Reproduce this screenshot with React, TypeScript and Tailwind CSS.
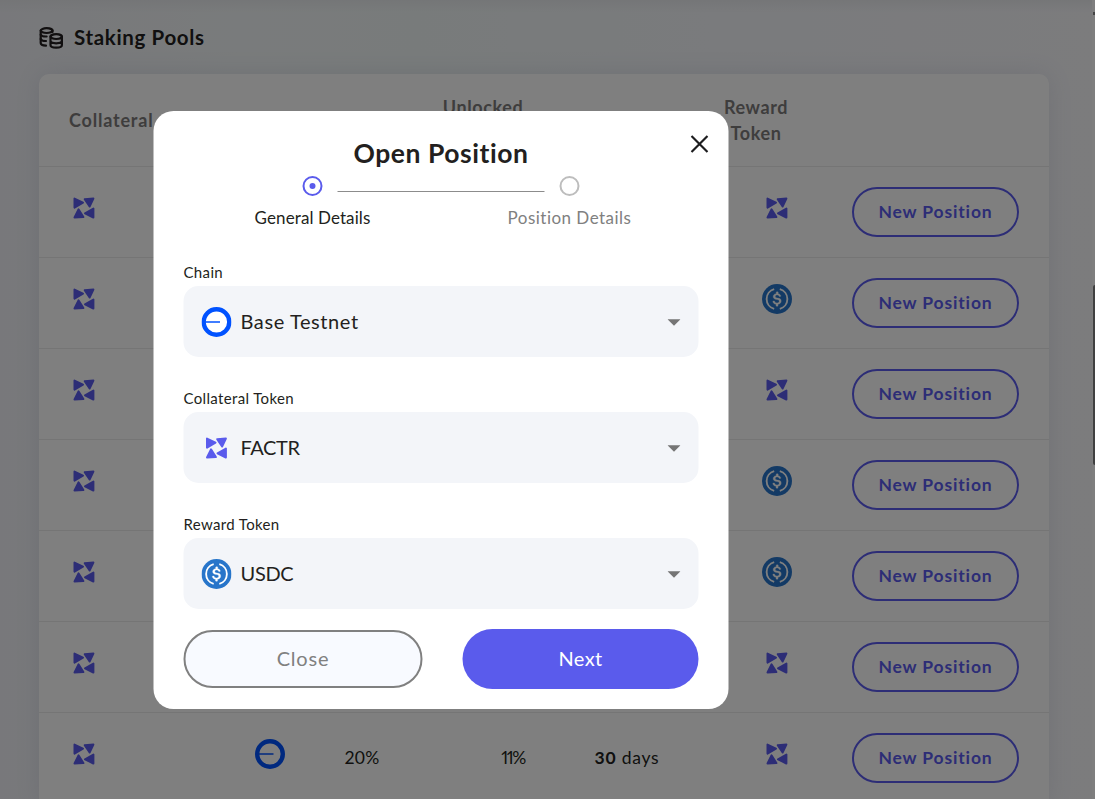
import type { ReactNode } from "react";

type Token = "factr" | "usdc";

interface Pool {
  reward: Token;
  details?: { apr: string; unlocked: string; days: number };
}

const pools: Pool[] = [
  { reward: "factr" },
  { reward: "usdc" },
  { reward: "factr" },
  { reward: "usdc" },
  { reward: "usdc" },
  { reward: "factr" },
  { reward: "factr", details: { apr: "20%", unlocked: "11%", days: 30 } },
];

function FactrIcon() {
  return (
    <svg viewBox="0 0 30 30" className="h-[30px] w-[30px] shrink-0" fill="#5a5bec" stroke="#5a5bec" strokeWidth="2" strokeLinejoin="round">
      <path d="M5.500 5.600 14 9.600 5.500 14.600Z" />
      <path d="M15.700 6.200 24.400 5.600 20.600 13.500Z" />
      <path d="M9.500 16.400 14.400 24.100 5.500 24.500Z" />
      <path d="M24.400 15.500V24.500L16 20.300Z" />
    </svg>
  );
}

function UsdcIcon() {
  return (
    <svg viewBox="0 0 32 32" className="h-[30px] w-[30px] shrink-0">
      <circle cx="16" cy="16" r="16" fill="#2775ca" />
      <path
        fill="#fff"
        stroke="#fff"
        strokeWidth="0.3"
        d="M20.5 18.2c0-2.200-1.300-2.900-4-3.200-1.900-.3-2.300-.8-2.300-1.700s.7-1.500 1.900-1.500c1.100 0 1.800.4 2.100 1.300.1.2.2.3.4.3h1c.3 0 .5-.2.5-.5v-.1c-.3-1.400-1.400-2.400-2.800-2.500V8.800c0-.3-.2-.5-.6-.5h-1c-.3 0-.5.2-.6.5v1.500c-2 .2-3.200 1.500-3.200 3.100 0 2 1.300 2.900 4 3.200 1.800.3 2.400.7 2.400 1.800s-1 1.800-2.200 1.800c-1.800 0-2.400-.7-2.600-1.700-.1-.3-.2-.4-.4-.4h-1.100c-.3 0-.5.2-.5.5v.1c.3 1.600 1.300 2.700 3.400 3v1.500c0 .3.200.5.600.6h1c.3 0 .5-.2.600-.6v-1.500c2-.3 3.400-1.700 3.400-3.500z"
      />
      <path d="M13 5.400a11 11 0 0 0 0 21.200M19 5.400a11 11 0 0 1 0 21.200" fill="none" stroke="#fff" strokeWidth="2" />
    </svg>
  );
}

function BaseIcon() {
  return (
    <svg viewBox="0 0 30 30" className="h-[30px] w-[30px] shrink-0">
      <circle cx="15" cy="15" r="12.800" fill="#fff" stroke="#0052ff" strokeWidth="4.400" />
      <path d="M4 15H18.500" stroke="#0052ff" strokeWidth="1.500" />
    </svg>
  );
}

function CoinsIcon() {
  return (
    <svg viewBox="0 0 24 22" className="h-[22px] w-6 shrink-0" fill="none" stroke="#231f20" strokeWidth="2.200" strokeLinecap="round">
      <ellipse cx="7.600" cy="3.600" rx="5.900" ry="2.400" />
      <path d="M1.700 3.600V16C1.700 17.600 3.600 18.500 7 18.600" />
      <path d="M1.700 7.700C2.500 9.200 4.600 9.600 7.600 9.500M1.700 11.900C2.500 13.400 4.400 14.100 7 14M13.500 3.600V5" />
      <ellipse cx="17.200" cy="9.600" rx="5.700" ry="2.400" />
      <path d="M11.500 9.600V18C11.500 21.500 22.900 21.500 22.900 18V9.600M11.500 13.800C11.500 17.100 22.900 17.100 22.900 13.800" />
    </svg>
  );
}

function TokenIcon({ token }: { token: Token }) {
  return token === "factr" ? <FactrIcon /> : <UsdcIcon />;
}

function SelectField({ label, icon, value, valueClass }: { label: string; icon: ReactNode; value: string; valueClass: string }) {
  return (
    <div className="mb-[28px]">
      <div className="h-[27px] text-[15px] leading-[27px] tracking-[0.35px]">{label}</div>
      <button className="flex h-[71px] w-full items-center rounded-[15px] bg-[#f3f5f9] px-[18px] text-left">
        {icon}
        <span className={valueClass}>{value}</span>
        <svg viewBox="0 0 13 7" className="mt-px ml-auto h-[7px] w-[13px]" fill="#757575">
          <path d="M0 .3H13L6.500 6.800Z" />
        </svg>
      </button>
    </div>
  );
}

function PoolsTable() {
  const cols = "grid grid-cols-[191px_80px_104px_138px_150px_150px_197px] items-center border-b border-[#eaeaea]";
  return (
    <div className="mt-[24px] w-[1010px] rounded-t-[10px] bg-white shadow-[0_0_24px_rgba(80,90,130,0.12)]">
      <div className={`${cols} h-[93px] text-center text-[18px] leading-[26px] font-bold tracking-[0.6px] text-[#7c7a7a]`}>
        <div className="pl-[30px] text-left tracking-[0.8px]">Collateral</div>
        <div />
        <div />
        <div className="pb-[26px]">Unlocked</div>
        <div />
        <div className="pr-[42px]">Reward<br />Token</div>
        <div />
      </div>
      {pools.map(({ reward, details }, i) => (
        <div key={i} className={`${cols} h-[91px] text-center text-[17.5px]`}>
          <div className="pb-2 pl-[30px]"><FactrIcon /></div>
          <div className="flex justify-center pb-2"><BaseIcon /></div>
          <div className="tracking-[0.3px]">{details?.apr}</div>
          <div className="pl-[60px] tracking-[-1.400px] proportional-nums">{details?.unlocked}</div>
          <div className="tracking-[0.750px]">{details && <><b>{details.days}</b> days</>}</div>
          <div className="flex justify-center pb-2"><TokenIcon token={reward} /></div>
          <button className="h-[50px] w-[167px] rounded-full border-2 border-[#5a5bec] text-[17.5px] font-bold tracking-[0.850px] text-[#5a5bec]">New Position</button>
        </div>
      ))}
    </div>
  );
}

function OpenPositionDialog() {
  return (
    <div className="relative h-[598px] w-[575px] translate-x-[0.5px] rounded-[20px] bg-white px-[30px] pt-[25px]">
      <button className="absolute top-[24px] right-[20px]">
        <svg viewBox="0 0 18 18" className="h-[18px] w-[18px]" fill="none" stroke="#1d1d1f" strokeWidth="2.200">
          <path d="M1 1 17 17M17 1 1 17" />
        </svg>
      </button>
      <h2 className="text-center text-[26.5px] leading-[34px] font-bold tracking-[0.550px]">Open Position</h2>
      <div className="mt-[6px] flex items-center justify-center gap-[15px]">
        <div className="flex h-5 w-5 items-center justify-center rounded-full border-2 border-[#5a5bec]">
          <div className="h-1.5 w-1.5 rounded-full bg-[#5a5bec]" />
        </div>
        <div className="mt-[10px] h-px w-[207px] bg-[#8c8c8c]" />
        <div className="h-5 w-5 rounded-full border-2 border-[#bdbdbd]" />
      </div>
      <div className="mt-[10px] grid grid-cols-[257px_257px] justify-center text-center text-[17px] leading-6">
        <div className="tracking-[0.100px]">General Details</div>
        <div className="tracking-[0.480px] text-[#808080]">Position Details</div>
      </div>
      <div className="mt-[29px]">
        <SelectField label="Chain" icon={<BaseIcon />} value="Base Testnet" valueClass="ml-[9px] pb-0.5 text-[20px] tracking-[0.600px]" />
        <SelectField label="Collateral Token" icon={<FactrIcon />} value="FACTR" valueClass="ml-[9px] pb-0.5 text-[20px] tracking-[-0.400px]" />
        <SelectField label="Reward Token" icon={<UsdcIcon />} value="USDC" valueClass="ml-[9px] pb-0.5 text-[20px] tracking-[-0.300px]" />
      </div>
      <div className="mt-[-8px] flex items-center justify-between">
        <button className="h-[58px] w-[239px] rounded-full border-2 border-[#808080] bg-[#f8faff] pb-0.5 text-[20px] tracking-[0.800px] text-[#808080]">Close</button>
        <button className="h-[60px] w-[236px] rounded-full bg-[#5a5bec] pb-0.5 text-[20px] tracking-[0.400px] text-white">Next</button>
      </div>
    </div>
  );
}

export default function App() {
  return (
    <div className="relative h-[799px] w-[1095px] overflow-hidden bg-[linear-gradient(90deg,#f0f1f6_0%,#f3f7f8_22%,#f1f7f7_38%,#f4f6fa_65%,#f8f8fb_100%)] font-['Lato',sans-serif] text-[#231f20]">
      <div className="flex h-full">
        <main className="w-[1092px] pl-[39px]">
          <div className="-ml-[39px] h-[25px] w-[1092px] bg-linear-to-b from-[#e6e8eb]/70 to-transparent to-50%" />
          <div className="flex h-[25px] items-center">
            <CoinsIcon />
            <h1 className="ml-[11px] text-[20.5px] font-bold tracking-[0.650px]">Staking Pools</h1>
          </div>
          <PoolsTable />
        </main>
        <div className="w-[3px] bg-[#fcfcfc] pt-3">
          <div className="ml-px h-[3px] w-0.5 bg-[#8b8b8b]" />
          <div className="mt-[270px] ml-px h-[180px] w-0.5 rounded-l bg-[#808080]" />
        </div>
      </div>
      <div className="absolute inset-0 bg-black/50 pt-[111px] pl-[153px]">
        <OpenPositionDialog />
      </div>
    </div>
  );
}
